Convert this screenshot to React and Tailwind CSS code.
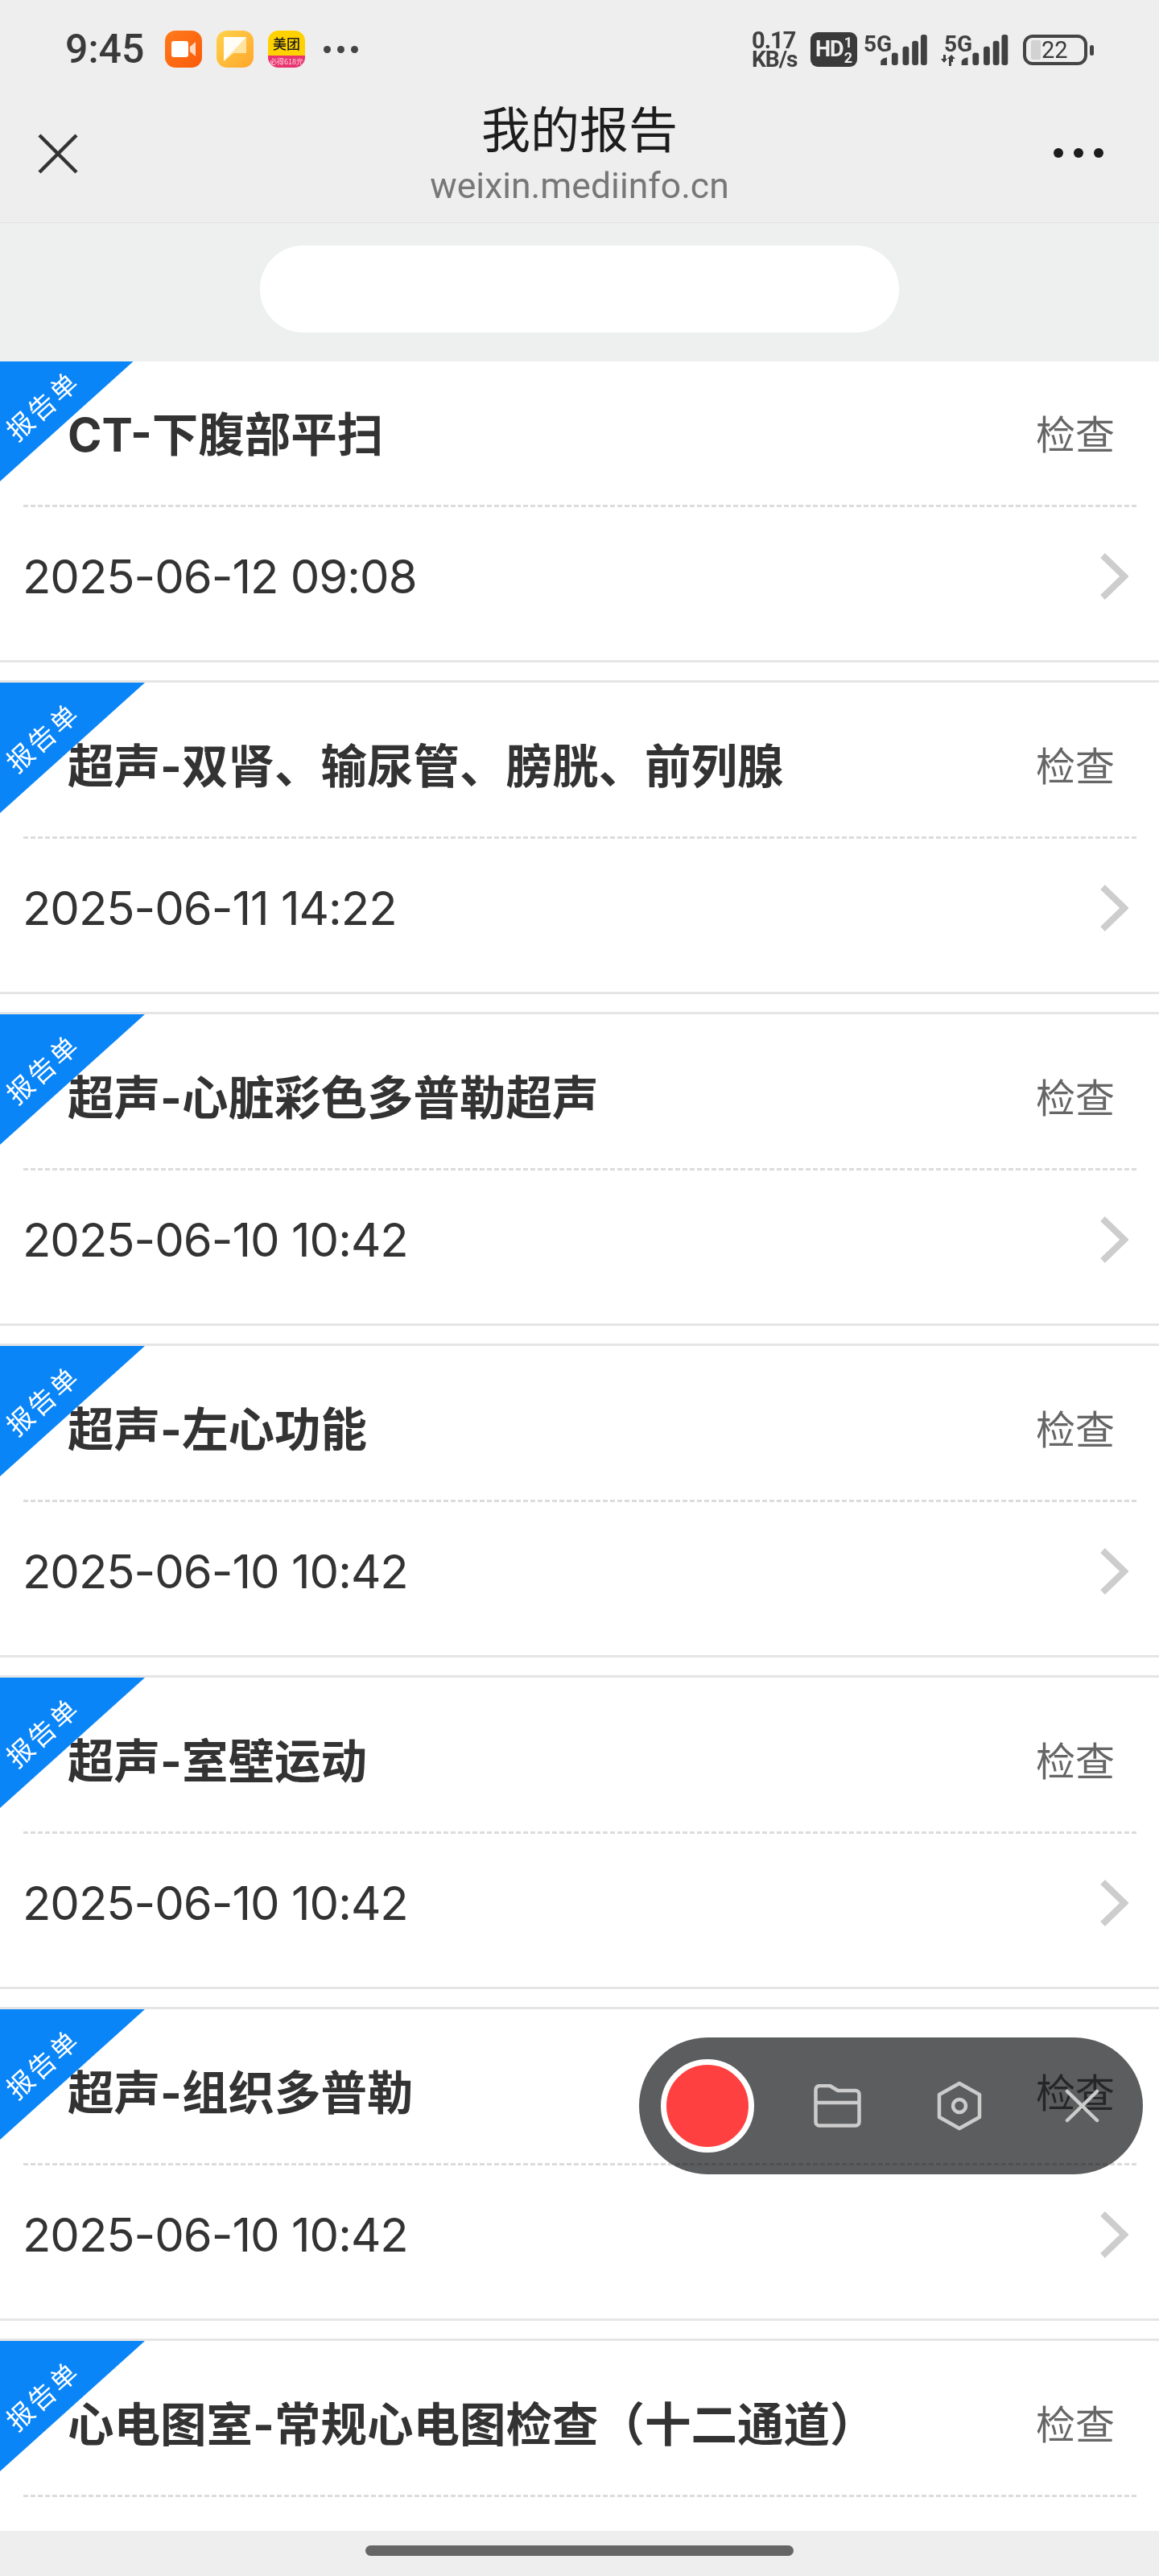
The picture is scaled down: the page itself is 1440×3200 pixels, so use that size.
import React from 'react';

const reports = [
  { title: 'CT-下腹部平扫', date: '2025-06-12 09:08' },
  { title: '超声-双肾、输尿管、膀胱、前列腺', date: '2025-06-11 14:22' },
  { title: '超声-心脏彩色多普勒超声', date: '2025-06-10 10:42' },
  { title: '超声-左心功能', date: '2025-06-10 10:42' },
  { title: '超声-室壁运动', date: '2025-06-10 10:42' },
  { title: '超声-组织多普勒', date: '2025-06-10 10:42' },
  { title: '心电图室-常规心电图检查（十二通道）', date: '' },
];

function SignalBars({ className }) {
  return (
    <svg className={className} viewBox="0 0 60 40" fill="#404040">
      <path d="M1 39V34Q1 31 9 29V39Z" />
      <rect x="15" y="23" width="8" height="16" rx="3" />
      <rect x="29" y="15" width="8" height="24" rx="3" />
      <rect x="41" y="8" width="8" height="31" rx="3" />
      <rect x="52" y="0" width="8" height="39" rx="3" />
    </svg>
  );
}

function StatusBar() {
  return (
    <div className="h-[100px] pl-[81px] pr-[81px] pt-[38px] flex justify-between items-start">
      {/* Left: clock and notification icons */}
      <div className="flex items-center">
        <span className="w-[98px] h-[46px] flex items-center font-['Roboto',sans-serif] text-[50px] font-medium text-[#3a3a3a] leading-none">9:45</span>
        <div className="ml-[26px] w-[46px] h-[46px] rounded-[13px] bg-gradient-to-br from-[#ff7a1a] to-[#fb5a0a] flex items-center justify-center">
          <svg className="w-[30px] h-[20px]" viewBox="0 0 30 20" fill="#fff">
            <rect x="0" y="0" width="21" height="20" rx="3" />
            <path d="M23 7L30 1V19L23 13Z" fill="#ffd9c2" />
          </svg>
        </div>
        <div className="ml-[18px] w-[46px] h-[46px] rounded-[13px] bg-gradient-to-br from-[#ffd24a] to-[#ffa62b] flex items-center justify-center">
          <svg className="w-[28px] h-[30px]" viewBox="0 0 28 30">
            <path d="M0 0H28V20H12L0 30Z" fill="#ffe3a0" />
            <path d="M0 0H28L0 30Z" fill="#fffdf5" />
          </svg>
        </div>
        <div className="ml-[18px] w-[46px] h-[46px] rounded-[13px] overflow-hidden flex flex-col">
          <div className="h-[31px] bg-[#ffd100] flex items-center justify-center text-[17px] leading-none font-medium text-[#1c1c1c]">美团</div>
          <div className="h-[15px] bg-[#e8336e] flex items-center justify-center text-[9px] leading-none whitespace-nowrap text-[#ffd9e4]">必得618元</div>
        </div>
        <div className="ml-[23px] flex gap-[8px]">
          <span className="w-[9px] h-[9px] rounded-full bg-[#444]" />
          <span className="w-[9px] h-[9px] rounded-full bg-[#444]" />
          <span className="w-[9px] h-[9px] rounded-full bg-[#444]" />
        </div>
      </div>

      {/* Right: network, signal, battery */}
      <div className="flex items-start">
        <div className="w-[66px] flex flex-col font-['Roboto',sans-serif] font-bold text-[#404040] leading-[24px] tracking-[-1px]">
          <span className="text-[29px]">0.17</span>
          <span className="text-[28px]">KB/s</span>
        </div>
        <div className="ml-[7px] mt-[2px] w-[58px] h-[43px] rounded-[9px] bg-[#3a3a3a] flex items-center justify-center font-['Roboto',sans-serif] font-bold text-[#eee]">
          <span className="text-[27px] tracking-[-1px] leading-none">HD</span>
          <span className="ml-[1px] flex flex-col text-[18px] leading-[19px]">
            <span>1</span>
            <span>2</span>
          </span>
        </div>
        <div className="relative ml-[8px] mt-[5px] w-[79px] h-[40px]">
          <span className="absolute left-0 top-0 font-['Roboto',sans-serif] font-bold text-[28px] leading-[24px] text-[#404040]">5G</span>
          <SignalBars className="absolute right-0 top-0 w-[59px] h-[39px]" />
        </div>
        <div className="relative ml-[17px] mt-[5px] w-[84px] h-[40px]">
          <span className="absolute left-[4px] top-0 font-['Roboto',sans-serif] font-bold text-[28px] leading-[24px] text-[#404040]">5G</span>
          <svg className="absolute left-0 top-[25px] w-[18px] h-[14px]" viewBox="0 0 18 14" fill="#404040">
            <path d="M6 0V5H8L4 10 0 5H3V0ZM10 14V5H8L13 0 18 5H15V9H13V14Z" />
          </svg>
          <SignalBars className="absolute right-0 top-0 w-[60px] h-[39px]" />
        </div>
        <div className="ml-[18px] mt-[5px] flex items-center">
          <div className="w-[80px] h-[38px] rounded-[12px] border-[4px] border-[#444] pl-[6px] py-[3px] flex items-stretch">
            <span className="w-[12px] bg-[#d2d2d2] rounded-[2px]" />
            <span className="ml-[1px] font-['Roboto',sans-serif] text-[29px] leading-[24px] text-[#3a3a3a]">22</span>
          </div>
          <span className="ml-[3px] w-[5px] h-[13px] rounded-full bg-[#444]" />
        </div>
      </div>
    </div>
  );
}

function NavBar() {
  return (
    <div className="h-[177px] px-[47px] flex items-start border-b border-[#e3e3e3]">
      <div className="flex-1">
        <svg className="mt-[66px] w-[50px] h-[50px]" viewBox="0 0 50 50" stroke="#333" strokeWidth="4.5" fill="none">
          <path d="M2 2L48 48M48 2L2 48" />
        </svg>
      </div>
      <div className="flex flex-col items-center">
        <span className="mt-[25px] text-[61px] leading-[66px] text-[#1d1d1d]">我的报告</span>
        <span className="mt-[16px] font-['Roboto',sans-serif] text-[44.5px] leading-[48px] text-[#777]">weixin.mediinfo.cn</span>
      </div>
      <div className="flex-1 flex justify-end">
        <div className="mt-[84px] mr-[22px] flex gap-[13px]">
          <span className="w-[12px] h-[12px] rounded-full bg-[#1d1d1d]" />
          <span className="w-[12px] h-[12px] rounded-full bg-[#1d1d1d]" />
          <span className="w-[12px] h-[12px] rounded-full bg-[#1d1d1d]" />
        </div>
      </div>
    </div>
  );
}

function ReportCard({ title, date }) {
  return (
    <div className="relative mb-[22px] bg-white border-y-[3px] border-[#e5e5e5]">
      <div className="absolute left-0 top-0 w-[180px] h-[162px] bg-[#0a85f7] [clip-path:polygon(0_0,100%_0,0_100%)]" />
      <span className="absolute left-[-2px] top-[47px] w-[108px] whitespace-nowrap text-center -rotate-[42deg] text-[33px] leading-[40px] tracking-[3px] text-white">报告单</span>
      <div className="h-[191px] pl-[84px] pr-[55px] pt-[10px] flex items-center justify-between">
        <span className="mt-[8px] font-['Inter','Noto_Sans_CJK_SC',sans-serif] text-[57.5px] font-bold leading-none text-[#333]">{title}</span>
        <span className="text-[49px] leading-none text-[#666]">检查</span>
      </div>
      <div className="ml-[29px] mr-[28px] h-[3px] bg-[repeating-linear-gradient(90deg,#dcdcdc_0_6px,transparent_6px_9px)]" />
      <div className="h-[190px] pl-[28px] pr-[38px] pb-[18px] flex items-center justify-between">
        <span className="font-['Inter',sans-serif] text-[58px] leading-none tracking-[-1px] text-[#333]">{date}</span>
        <svg className="w-[36px] h-[60px]" viewBox="0 0 36 60" fill="none" stroke="#cdcdcd" strokeWidth="8">
          <path d="M4 4L31 30L4 56" />
        </svg>
      </div>
    </div>
  );
}

function RecorderPill() {
  return (
    <div className="absolute left-[794px] top-[2531px] w-[626px] h-[170px] pl-[27px] flex items-center">
      <div className="absolute inset-0 rounded-full bg-[#5c5d5e] mix-blend-multiply" />
      <div className="relative w-[116px] h-[116px] rounded-full bg-[#ff4040] border-[7px] border-white" />
      <svg className="relative ml-[74px] w-[59px] h-[54px]" viewBox="0 0 59 54" fill="none" stroke="#cccccc" strokeWidth="4.5" strokeLinejoin="round">
        <path d="M2.5 7a5 5 0 0 1 5-5H20L30 8H52a4.500 4.500 0 0 1 4.500 4.500V47a4.500 4.500 0 0 1-4.500 4.500H7a4.500 4.500 0 0 1-4.500-4.500ZM2.500 23H56.500" />
      </svg>
      <svg className="relative ml-[94px] w-[56px] h-[62px]" viewBox="0 0 56 62" fill="none" stroke="#cccccc" strokeWidth="4.500" strokeLinejoin="round">
        <path d="M28 3L53 17V45L28 59L3 45V17Z" />
        <circle cx="28" cy="31" r="8" />
      </svg>
      <svg className="relative ml-[103px] w-[43px] h-[42px]" viewBox="0 0 43 42" fill="none" stroke="#cccccc" strokeWidth="4.500" strokeLinecap="round">
        <path d="M3 39L40 3M3 3L40 39" />
      </svg>
    </div>
  );
}

export default function App() {
  return (
    <div className="relative w-[1440px] h-[3200px] overflow-hidden flex flex-col bg-white font-['Noto_Sans_CJK_SC',sans-serif]">
      <div className="bg-[#eeeeee]">
        <StatusBar />
        <NavBar />
      </div>
      {/* Search pill */}
      <div className="h-[172px] bg-[#eef0f0] pt-[28px] flex justify-center">
        <div className="w-[794px] h-[108px] rounded-full bg-white" />
      </div>
      <main className="flex-1 overflow-hidden">
        <div className="-mt-[16px]">
          {reports.map((r, i) => (
            <ReportCard key={i} title={r.title} date={r.date} />
          ))}
        </div>
      </main>
      {/* Home indicator */}
      <div className="h-[56px] bg-[#eeeeee] pt-[18px] flex justify-center">
        <div className="w-[532px] h-[13px] rounded-full bg-[#666]" />
      </div>
      <RecorderPill />
    </div>
  );
}
